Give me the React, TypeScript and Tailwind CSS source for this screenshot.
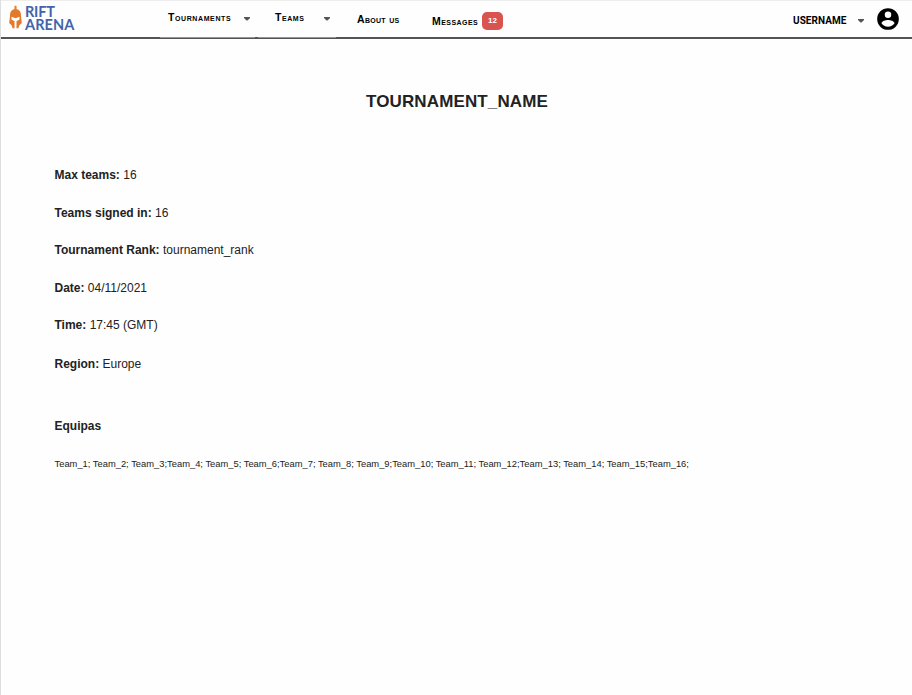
import React from "react";

const details = [
  { label: "Max teams:", value: "16", height: "h-[38px]" },
  { label: "Teams signed in:", value: "16", height: "h-[37px]" },
  { label: "Tournament Rank:", value: "tournament_rank", height: "h-[38px]" },
  { label: "Date:", value: "04/11/2021", height: "h-[37px]" },
  { label: "Time:", value: "17:45 (GMT)", height: "h-[39px]" },
  { label: "Region:", value: "Europe", height: "h-[62px]" },
];

const teams =
  "Team_1; Team_2; Team_3;Team_4; Team_5; Team_6;Team_7; Team_8; Team_9;Team_10; Team_11; Team_12;Team_13; Team_14; Team_15;Team_16;";

function Caret() {
  return (
    <svg width="6" height="4" viewBox="0 0 6 4" className="shrink-0">
      <path d="M0 0h6v1L3.5 3.5h-1L0 1z" fill="#555" />
    </svg>
  );
}

function Logo() {
  return (
    <div className="flex h-full w-[159px] shrink-0 pl-[8px]">
      <svg width="13" height="25" viewBox="0 0 13 25" className="mt-[4px]">
        <path d="M5.4 1.2 6.5.5l1.1.7V5H5.4z" fill="#e58235" />
        <path
          fillRule="evenodd"
          d="M4.8 4.3h3.4C11 5.2 12.2 8 12 11l.8 7-2.4 2.3-1 2.9H7.5v-7l3-1.6v-2.8L6.5 13.3l-4-1.5v2.8l3 1.6v7H3.6l-1-2.9L.2 18l.8-7C.8 8 2 5.2 4.8 4.3z"
          fill="#e17a2d"
        />
      </svg>
      <div className="mt-[5px] ml-[3px] font-['Lato'] text-[14.5px] leading-[12.5px] font-bold text-[#4264ab]">
        <div className="tracking-[-0.2px]">RIFT</div>
        <div className="tracking-[0.1px]">ARENA</div>
      </div>
    </div>
  );
}

function NavBar() {
  return (
    <header className="flex h-[39px] border-t border-b-2 border-t-[#eee] border-b-[#555355] text-[10.5px] leading-[12px] font-bold text-black">
      <Logo />
      <nav className="flex flex-1 [font-variant-caps:small-caps]">
        <div className="-mb-px flex h-[37px] w-[95px] shrink-0 border-b border-[#979597] pt-[10px] pl-[8px]">
          <span className="w-[76px] tracking-[0.6px] whitespace-nowrap">Tournaments</span>
          <span className="pt-[6px]"><Caret /></span>
        </div>
        <div className="ml-[3px] -mb-px flex h-[37px] w-[78px] shrink-0 border-b border-[#979597] pt-[10px] pl-[17px]">
          <span className="w-[49px] shrink-0 tracking-[0.55px] whitespace-nowrap">Teams</span>
          <span className="pt-[6px]"><Caret /></span>
        </div>
        <div className="w-[74px] shrink-0 pt-[12px] pl-[21px] tracking-[0.3px] whitespace-nowrap">About us</div>
        <div className="flex pt-[11px] pl-[22px]">
          <span className="w-[50px] pt-[3px] tracking-[0.45px] whitespace-nowrap">Messages</span>
          <span className="flex h-[18px] w-[21px] items-center justify-center rounded-[5px] bg-[#d9534f] text-[8px] text-white">
            12
          </span>
        </div>
      </nav>
      <div className="flex w-[119px] shrink-0">
        <span className="w-[65px] shrink-0 pt-[14px] font-['Roboto'] text-[10px] tracking-[0.05px]">USERNAME</span>
        <span className="w-[17px] shrink-0 pt-[18px]"><Caret /></span>
        <svg width="26" height="26" viewBox="0 0 24 24" className="mt-[5px] shrink-0">
          <path
            d="M12 2a10 10 0 1 0 0 20 10 10 0 0 0 0-20zm0 3a3 3 0 1 1 0 6 3 3 0 0 1 0-6zm0 14.2A7.2 7.2 0 0 1 6 16c.03-2 4-3.1 6-3.1s5.97 1.1 6 3.1a7.2 7.2 0 0 1-6 3.2z"
            fill="#000"
          />
        </svg>
      </div>
    </header>
  );
}

export default function App() {
  return (
    <div className="h-[695px] w-[912px] overflow-hidden border-l border-[#ddd] bg-[#fefefe] font-['Liberation_Sans',Arial,sans-serif] text-[#222]">
      <NavBar />
      <main className="pl-[53.5px]">
        <h1 className="-ml-[53.5px] pt-[53px] pl-[1px] text-center text-[17px] leading-[20px] font-bold tracking-[0.13px]">
          TOURNAMENT_NAME
        </h1>
        <section className="pt-[56px] text-[12px] leading-[14px]">
          {details.map((d) => (
            <p key={d.label} className={d.height}>
              <b>{d.label}</b> {d.value}
            </p>
          ))}
          <h2 className="h-[39px] font-bold">Equipas</h2>
        </section>
        <p className="text-[9.37px] leading-[12px] whitespace-nowrap">{teams}</p>
      </main>
    </div>
  );
}
